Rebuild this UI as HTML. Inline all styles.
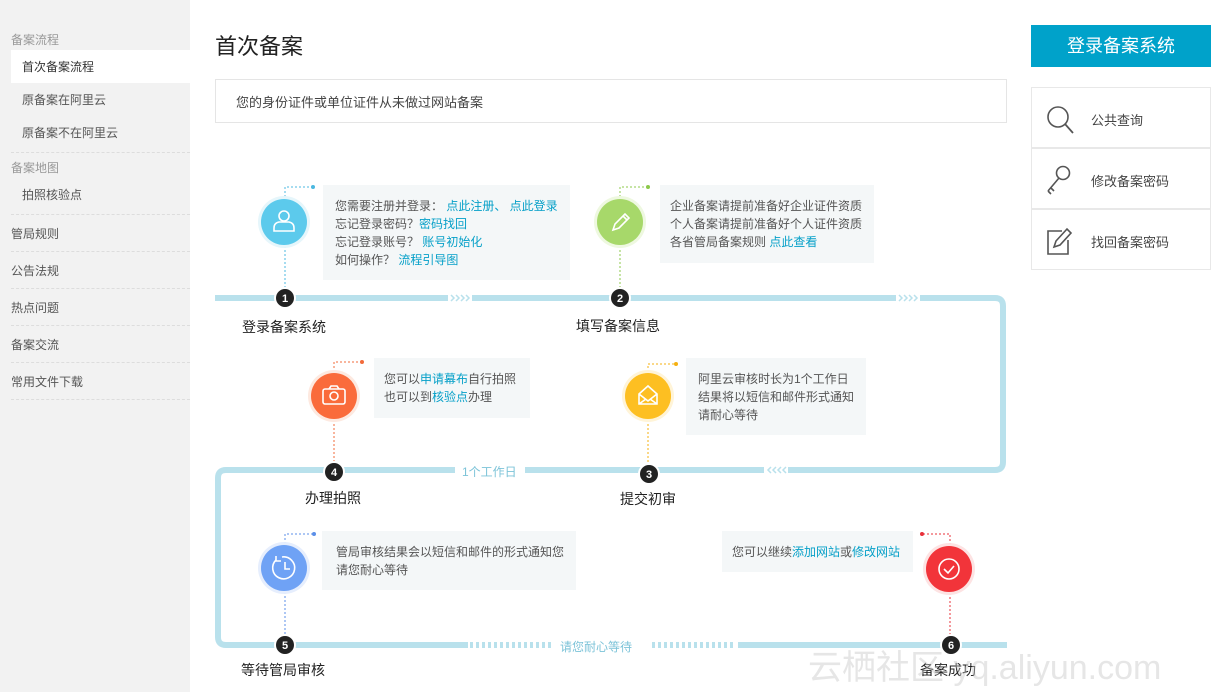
<!DOCTYPE html>
<html><head><meta charset="utf-8"><style>
*{margin:0;padding:0;box-sizing:border-box}
body{width:1217px;height:692px;overflow:hidden;background:#fff;position:relative;font-family:"Liberation Sans","Noto Sans CJK SC",sans-serif;color:#333}
.a{position:absolute;white-space:nowrap}
.side{position:absolute;left:0;top:0;width:190px;height:692px;background:#f2f2f2}
.g{color:#999;font-size:12px}
.s{font-size:12px;color:#555}
.d{position:absolute;left:11px;width:179px;border-top:1px dashed #ddd}
.sec{font-size:12px;color:#555}
.box{position:absolute;background:#f4f7f8;font-size:12px;color:#555;line-height:18px;padding:0}
.lk{color:#06a0c8}
.lbl{font-size:14px;color:#222}
.row{position:absolute;left:1031px;width:180px;height:61px;border:1px solid #e8e8e8;font-size:13px;color:#444}
</style></head><body>
<div class="side"></div>
<div class="a g" style="left:11px;top:31px">备案流程</div>
<div class="a" style="left:11px;top:50px;width:179px;height:33px;background:#fff"></div>
<div class="a s" style="left:22px;top:58px;color:#333">首次备案流程</div>
<div class="a s" style="left:22px;top:91px">原备案在阿里云</div>
<div class="a s" style="left:22px;top:124px">原备案不在阿里云</div>
<div class="d" style="top:152px"></div>
<div class="a g" style="left:11px;top:159px">备案地图</div>
<div class="a s" style="left:22px;top:186px">拍照核验点</div>
<div class="d" style="top:214px"></div>
<div class="a sec" style="left:11px;top:225px">管局规则</div>
<div class="d" style="top:251px"></div>
<div class="a sec" style="left:11px;top:262px">公告法规</div>
<div class="d" style="top:288px"></div>
<div class="a sec" style="left:11px;top:299px">热点问题</div>
<div class="d" style="top:325px"></div>
<div class="a sec" style="left:11px;top:336px">备案交流</div>
<div class="d" style="top:362px"></div>
<div class="a sec" style="left:11px;top:373px">常用文件下载</div>
<div class="d" style="top:399px"></div>

<div class="a" style="left:215px;top:29px;font-size:22px;color:#222">首次备案</div>
<div class="a" style="left:215px;top:79px;width:792px;height:44px;border:1px solid #e5e5e5"></div>
<div class="a" style="left:236px;top:92px;font-size:13px;color:#444">您的身份证件或单位证件从未做过网站备案</div>

<svg class="a" style="left:0;top:0" width="1217" height="692">
<g fill="none" stroke="#b9e1ec" stroke-width="6">
<path d="M215 298 H995 Q1003 298 1003 306 V462 Q1003 470 995 470 H226 Q218 470 218 478 V637 Q218 645 226 645 H1007"/>
</g>
<g fill="#fff"><rect x="448" y="293" width="24" height="10"/><rect x="896" y="293" width="24" height="10"/><rect x="764" y="465" width="24" height="10"/><rect x="455" y="465" width="70" height="10"/><rect x="552" y="640" width="96" height="10"/></g>
<g fill="none" stroke="#b9e1ec" stroke-width="1.5"><path d="M451 295l3 3-3 3M456 295l3 3-3 3M461 295l3 3-3 3M466 295l3 3-3 3M899 295l3 3-3 3M904 295l3 3-3 3M909 295l3 3-3 3M914 295l3 3-3 3M771 467l-3 3 3 3M776 467l-3 3 3 3M781 467l-3 3 3 3M786 467l-3 3 3 3"/></g>
<g fill="#fff"><rect x="468" y="640" width="84" height="10"/><rect x="648" y="640" width="90" height="10"/></g>
<g fill="#b9e1ec"><path d="M470 642h3v6h-3zM476 642h3v6h-3zM482 642h3v6h-3zM488 642h3v6h-3zM494 642h3v6h-3zM500 642h3v6h-3zM506 642h3v6h-3zM512 642h3v6h-3zM518 642h3v6h-3zM524 642h3v6h-3zM530 642h3v6h-3zM536 642h3v6h-3zM542 642h3v6h-3zM548 642h3v6h-3zM652 642h3v6h-3zM658 642h3v6h-3zM664 642h3v6h-3zM670 642h3v6h-3zM676 642h3v6h-3zM682 642h3v6h-3zM688 642h3v6h-3zM694 642h3v6h-3zM700 642h3v6h-3zM706 642h3v6h-3zM712 642h3v6h-3zM718 642h3v6h-3zM724 642h3v6h-3zM730 642h3v6h-3z"/></g>
<text x="462" y="476" font-size="12" fill="#7cc3d8" font-family="Liberation Sans,Noto Sans CJK SC,sans-serif">1个工作日</text>
<text x="560" y="651" font-size="12" fill="#7cc3d8" font-family="Liberation Sans,Noto Sans CJK SC,sans-serif">请您耐心等待</text>
<!-- dotted connectors -->
<g fill="none" stroke-width="1" stroke-dasharray="2,2">
<path d="M285 246V290M285 197V187H313" stroke="#4cb8e0"/>
<path d="M620 246V290M620 197V187H648" stroke="#8cc84b"/>
<path d="M334 420V464M334 372V362H362" stroke="#f26b3b"/>
<path d="M648 420V466M648 372V364H676" stroke="#f5b010"/>
<path d="M285 592V637M285 544V534H314" stroke="#5b8fe8"/>
<path d="M950 593V637M950 545V534H922" stroke="#e8303a"/>
</g>
<g><circle cx="313" cy="187" r="2" fill="#4cb8e0"/><circle cx="648" cy="187" r="2" fill="#8cc84b"/><circle cx="362" cy="362" r="2" fill="#f26b3b"/><circle cx="676" cy="364" r="2" fill="#f5b010"/><circle cx="314" cy="534" r="2" fill="#5b8fe8"/><circle cx="922" cy="534" r="2" fill="#e8303a"/></g>
<!-- icon circles -->
<circle cx="284" cy="222" r="26" fill="#e6f6fb"/><circle cx="284" cy="222" r="23" fill="#5ccaec"/>
<circle cx="620" cy="222" r="26" fill="#eef8e0"/><circle cx="620" cy="222" r="23" fill="#a7d86a"/>
<circle cx="334" cy="396" r="26" fill="#fde9e0"/><circle cx="334" cy="396" r="23" fill="#fa6b3b"/>
<circle cx="648" cy="396" r="26" fill="#fff4d8"/><circle cx="648" cy="396" r="23" fill="#fdbf22"/>
<circle cx="284" cy="568" r="26" fill="#e6eefd"/><circle cx="284" cy="568" r="23" fill="#6fa2f5"/>
<circle cx="949" cy="569" r="26" fill="#fde3e3"/><circle cx="949" cy="569" r="23" fill="#f2343a"/>
<g fill="none" stroke="#fff" stroke-width="1.6">
<circle cx="284" cy="216" r="5"/><path d="M274 231v-3q0-5 5-6h10q5 1 5 6v3z"/>
<path d="M613 230l2-6 10-10 4 4-10 10z M623 216l4 4"/>
<rect x="323" y="389" width="22" height="15" rx="2"/><path d="M329 389l2-3h6l2 3"/><circle cx="334" cy="396" r="4"/>
<path d="M639 394l9-8 9 8v10h-18z M639 394l9 7 9-7 M639 404l7-5M657 404l-7-5"/>
<path d="M276 560a11 11 0 1 0 6-3"/><path d="M276 556v5h5"/><path d="M285 562v7h5"/>
<circle cx="949" cy="569" r="10"/><path d="M944 569l4 4 6-7"/>
</g>
<!-- number nodes -->
<g font-family="Liberation Sans,sans-serif" font-size="11" font-weight="bold" fill="#fff" text-anchor="middle">
<circle cx="285" cy="298" r="10" fill="#222" stroke="#fff" stroke-width="2"/><text x="285" y="302">1</text>
<circle cx="620" cy="298" r="10" fill="#222" stroke="#fff" stroke-width="2"/><text x="620" y="302">2</text>
<circle cx="649" cy="474" r="10" fill="#222" stroke="#fff" stroke-width="2"/><text x="649" y="478">3</text>
<circle cx="334" cy="472" r="10" fill="#222" stroke="#fff" stroke-width="2"/><text x="334" y="476">4</text>
<circle cx="285" cy="645" r="10" fill="#222" stroke="#fff" stroke-width="2"/><text x="285" y="649">5</text>
<circle cx="951" cy="645" r="10" fill="#222" stroke="#fff" stroke-width="2"/><text x="951" y="649">6</text>
</g>
</svg>

<div class="box" style="left:323px;top:185px;width:247px;height:95px;padding:12px 0 0 12px">您需要注册并登录： <span class="lk">点此注册、 点此登录</span><br>忘记登录密码？<span class="lk">密码找回</span><br>忘记登录账号？ <span class="lk">账号初始化</span><br>如何操作？ <span class="lk">流程引导图</span></div>
<div class="box" style="left:660px;top:185px;width:214px;height:78px;padding:12px 0 0 10px">企业备案请提前准备好企业证件资质<br>个人备案请提前准备好个人证件资质<br>各省管局备案规则 <span class="lk">点此查看</span></div>
<div class="box" style="left:374px;top:358px;width:156px;height:60px;padding:12px 0 0 10px">您可以<span class="lk">申请幕布</span>自行拍照<br>也可以到<span class="lk">核验点</span>办理</div>
<div class="box" style="left:686px;top:358px;width:180px;height:77px;padding:12px 0 0 12px">阿里云审核时长为1个工作日<br>结果将以短信和邮件形式通知<br>请耐心等待</div>
<div class="box" style="left:322px;top:531px;width:254px;height:59px;padding:12px 0 0 14px">管局审核结果会以短信和邮件的形式通知您<br>请您耐心等待</div>
<div class="box" style="left:722px;top:531px;width:191px;height:41px;padding:12px 0 0 10px">您可以继续<span class="lk">添加网站</span>或<span class="lk">修改网站</span></div>

<div class="a lbl" style="left:242px;top:317px">登录备案系统</div>
<div class="a lbl" style="left:576px;top:316px">填写备案信息</div>
<div class="a lbl" style="left:305px;top:488px">办理拍照</div>
<div class="a lbl" style="left:620px;top:489px">提交初审</div>
<div class="a lbl" style="left:241px;top:660px">等待管局审核</div>
<div class="a lbl" style="left:920px;top:660px">备案成功</div>
<div class="a" style="left:808px;top:640px;font-size:34px;color:rgba(200,200,200,0.45)">云栖社区 yq.aliyun.com</div>

<div class="a" style="left:1031px;top:25px;width:180px;height:42px;background:#00a2ca;color:#fff;font-size:18px;text-align:center;line-height:42px">登录备案系统</div>
<div class="row" style="top:87px"><svg class="a" style="left:13px;top:16px" width="32" height="32"><circle cx="13" cy="13" r="10" fill="none" stroke="#555" stroke-width="1.6"/><path d="M20 20l8 9" stroke="#555" stroke-width="1.8"/></svg><div class="a" style="left:59px;top:22px">公共查询</div></div>
<div class="row" style="top:148px"><svg class="a" style="left:13px;top:14px" width="32" height="34"><circle cx="18" cy="10" r="6.5" fill="none" stroke="#555" stroke-width="1.6"/><path d="M14 15L3 28M6 25l3 3M3 28l3 3" stroke="#555" stroke-width="1.6" fill="none"/></svg><div class="a" style="left:59px;top:22px">修改备案密码</div></div>
<div class="row" style="top:209px"><svg class="a" style="left:13px;top:14px" width="34" height="34"><path d="M17 7H3v23h20V16" fill="none" stroke="#555" stroke-width="1.6"/><path d="M9 23l2-6 11-12 4 4-11 12z" fill="none" stroke="#555" stroke-width="1.6"/></svg><div class="a" style="left:59px;top:22px">找回备案密码</div></div>
</body></html>
